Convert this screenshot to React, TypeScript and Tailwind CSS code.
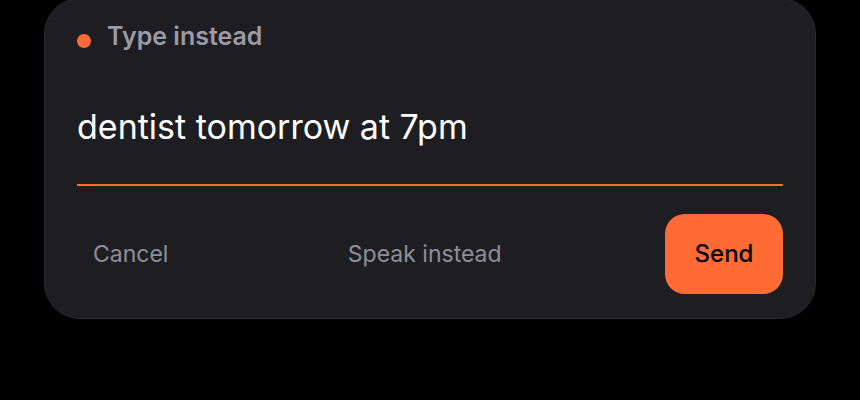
import React from "react";

export default function App() {
  return (
    <div
      className="w-[860px] h-[400px] bg-black overflow-hidden"
      style={{ fontFamily: "Inter, 'Noto Sans', sans-serif" }}
    >
      <div className="ml-[44px] -mt-[2px] w-[772px] rounded-[36px] border border-[#2a2a2f] bg-[#1e1e22] px-8 pt-[20px] pb-6">
        <div className="flex items-center gap-4 h-[34px]">
          <span className="mt-[9px] h-[14px] w-[14px] rounded-full bg-[#ff6b35]" />
          <span className="text-[25px] font-semibold leading-[34px] text-[#9b9ba4]">
            Type instead
          </span>
        </div>
        <div className="mt-[54px] border-b-2 border-[#ff6b35] pb-[36px] text-[34px] leading-[1.2] text-white">
          dentist tomorrow at 7pm
        </div>
        <div className="mt-[28px] flex items-center justify-between">
          <button className="h-20 px-4 text-[23px] text-[#8e8e98]">Cancel</button>
          <button className="h-20 px-4 text-[23px] text-[#8e8e98]">Speak instead</button>
          <button className="h-20 w-[118px] rounded-[20px] bg-[#ff6b35] text-[24px] font-medium text-black">
            Send
          </button>
        </div>
      </div>
    </div>
  );
}
